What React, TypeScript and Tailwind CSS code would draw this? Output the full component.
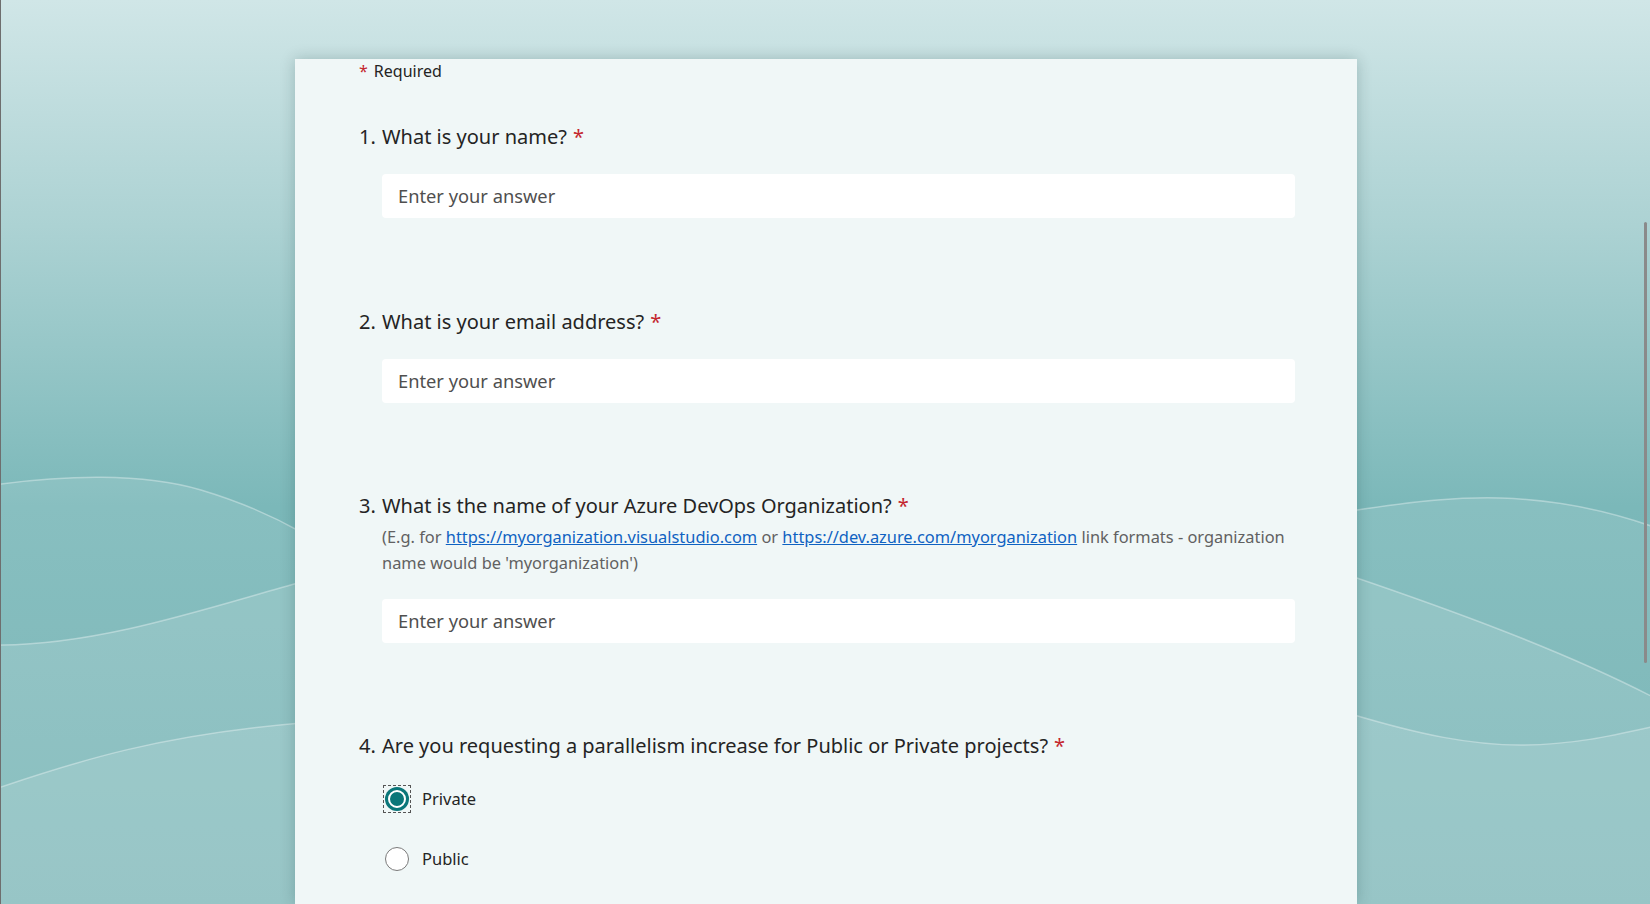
import React from "react";

const font = { fontFamily: '"Noto Sans", "Open Sans", sans-serif' };

function Background() {
  return (
    <svg
      className="absolute inset-0"
      width="1650"
      height="904"
      viewBox="0 0 1650 904"
      preserveAspectRatio="none"
    >
      <defs>
        <linearGradient id="bg" x1="0" y1="0" x2="0" y2="1">
          <stop offset="0" stopColor="#d0e6e7" />
          <stop offset="0.25" stopColor="#acd2d3" />
          <stop offset="0.56" stopColor="#7bb8b9" />
          <stop offset="1" stopColor="#6aaeaf" />
        </linearGradient>
      </defs>
      <rect x="0" y="0" width="1650" height="904" fill="url(#bg)" />
      {/* left waves */}
      <path d="M0,484 C60,476 140,472 200,490 C240,502 270,515 300,532 L300,904 L0,904 Z" fill="#ffffff" fillOpacity="0.1" />
      <path d="M0,484 C60,476 140,472 200,490 C240,502 270,515 300,532" fill="none" stroke="#ffffff" strokeOpacity="0.35" strokeWidth="1.5" />
      <path d="M0,645 C100,644 200,610 300,582 L300,904 L0,904 Z" fill="#ffffff" fillOpacity="0.12" />
      <path d="M0,645 C100,644 200,610 300,582" fill="none" stroke="#ffffff" strokeOpacity="0.35" strokeWidth="1.5" />
      <path d="M0,787 C80,760 160,735 300,723 L300,904 L0,904 Z" fill="#ffffff" fillOpacity="0.12" />
      <path d="M0,787 C80,760 160,735 300,723" fill="none" stroke="#ffffff" strokeOpacity="0.35" strokeWidth="1.5" />
      {/* right waves */}
      <path d="M1350,511 C1420,500 1460,497 1500,498 C1560,500 1610,512 1650,526 L1650,904 L1350,904 Z" fill="#ffffff" fillOpacity="0.1" />
      <path d="M1350,511 C1420,500 1460,497 1500,498 C1560,500 1610,512 1650,526" fill="none" stroke="#ffffff" strokeOpacity="0.35" strokeWidth="1.5" />
      <path d="M1350,576 C1450,610 1560,650 1650,696 L1650,904 L1350,904 Z" fill="#ffffff" fillOpacity="0.12" />
      <path d="M1350,576 C1450,610 1560,650 1650,696" fill="none" stroke="#ffffff" strokeOpacity="0.35" strokeWidth="1.5" />
      <path d="M1350,714 C1420,735 1470,745 1520,745 C1570,745 1610,736 1650,727 L1650,904 L1350,904 Z" fill="#ffffff" fillOpacity="0.12" />
      <path d="M1350,714 C1420,735 1470,745 1520,745 C1570,745 1610,736 1650,727" fill="none" stroke="#ffffff" strokeOpacity="0.35" strokeWidth="1.5" />
    </svg>
  );
}

function Asterisk() {
  return <span className="text-[#c4262e] ml-[6px]">*</span>;
}

function Question({
  num,
  children,
}: {
  num: string;
  children: React.ReactNode;
}) {
  return (
    <div className="flex text-[20px] leading-[28px] text-[#242424]">
      <span className="w-[23px] shrink-0">{num}</span>
      <span>{children}</span>
    </div>
  );
}

function AnswerInput() {
  return (
    <div className="ml-[23px] mt-[23px] h-[44px] rounded-[4px] bg-white flex items-center px-[16px] text-[18.3px] text-[#4f4f4f]">
      Enter your answer
    </div>
  );
}

export default function App() {
  return (
    <div
      className="relative w-[1650px] h-[904px] overflow-hidden border-l border-[#6e6e6e]"
      style={font}
    >
      <Background />
      <div className="relative pt-[59px] pl-[294px]">
        <div className="w-[1062px] h-[845px] bg-[#f0f7f7] shadow-[0_0_14px_rgba(0,40,40,0.22)] pl-[64px] pr-[62px]">
          <div className="h-[24px] leading-[24px] text-[16px] text-[#242424] flex">
            <span className="text-[#c4262e] mr-[6px]">*</span>
            <span>Required</span>
          </div>

          <div className="mt-[40px]">
            <Question num="1.">
              What is your name?
              <Asterisk />
            </Question>
            <AnswerInput />
          </div>

          <div className="mt-[90px]">
            <Question num="2.">
              What is your email address?
              <Asterisk />
            </Question>
            <AnswerInput />
          </div>

          <div className="mt-[89px]">
            <Question num="3.">
              What is the name of your Azure DevOps Organization?
              <Asterisk />
            </Question>
            <div className="ml-[23px] mt-[4px] text-[16.4px] leading-[26px] text-[#616161] whitespace-nowrap">
              (E.g. for{" "}
              <span className="text-[#0f62c2] underline">
                https://myorganization.visualstudio.com
              </span>{" "}
              or{" "}
              <span className="text-[#0f62c2] underline">
                https://dev.azure.com/myorganization
              </span>{" "}
              link formats - organization
              <br />
              name would be 'myorganization')
            </div>
            <AnswerInput />
          </div>

          <div className="mt-[89px]">
            <Question num="4.">
              Are you requesting a parallelism increase for Public or Private projects?
              <Asterisk />
            </Question>
            <div className="ml-[24px] mt-[23px] flex flex-col gap-[28px]">
              <div className="h-[32px] flex items-center">
                <div className="w-[28px] h-[28px] border border-dashed border-[#555] flex items-center justify-center">
                  <div className="w-[24px] h-[24px] shrink-0 rounded-full bg-[#0a7679] flex items-center justify-center">
                    <div className="w-[18px] h-[18px] rounded-full border-2 border-white bg-[#0a7679]" />
                  </div>
                </div>
                <span className="ml-[11px] text-[16.5px] text-[#242424]">Private</span>
              </div>
              <div className="h-[32px] flex items-center">
                <div className="w-[28px] h-[28px] flex items-center justify-center">
                  <div className="w-[24px] h-[24px] shrink-0 rounded-full bg-white border-[1.5px] border-[#7a7a7a]" />
                </div>
                <span className="ml-[11px] text-[16.5px] text-[#242424]">Public</span>
              </div>
            </div>
          </div>
        </div>
      </div>
      <div className="absolute right-[3px] top-[222px] w-[3px] h-[441px] rounded-full bg-[#8a8a8a]" />
    </div>
  );
}
